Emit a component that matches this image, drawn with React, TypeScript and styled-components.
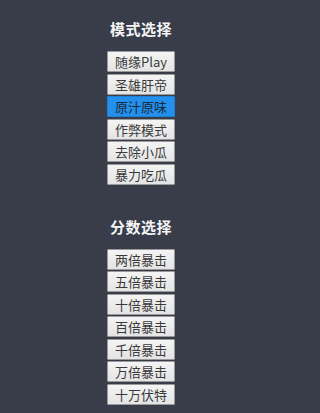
import React from "react";
import styled, { createGlobalStyle } from "styled-components";

const Global = createGlobalStyle`
  html, body { margin: 0; padding: 0; background: #393c49; }
  body { font-family: "Noto Sans CJK SC", "Liberation Sans", sans-serif; }
`;

const Page = styled.div`
  width: 282px;
  min-height: 413px;
  background: #393c49;
  display: flex;
  flex-direction: column;
  align-items: center;
  padding-top: 19px;
  box-sizing: border-box;
`;

const Section = styled.section<{ $gap: number }>`
  display: flex;
  flex-direction: column;
  align-items: center;
  margin-bottom: ${(p) => p.$gap}px;
`;

const Title = styled.h3`
  margin: 0 0 13px;
  color: #f4f4f6;
  font-size: 15px;
  line-height: 19px;
  font-weight: bold;
  letter-spacing: 0.5px;
`;

const List = styled.div`
  display: flex;
  flex-direction: column;
  align-items: center;
  gap: 1.5px;
`;

const Btn = styled.button<{ $active?: boolean }>`
  font-family: "Noto Sans CJK SC", "Liberation Sans", sans-serif;
  font-size: 13px;
  line-height: 15px;
  height: 21px;
  padding: 2px 7px;
  border: 1px solid ${(p) => (p.$active ? "#1f7fd6" : "#9a9a9a")};
  border-radius: 1px;
  color: ${(p) => (p.$active ? "#1b2a3a" : "#3a3a3a")};
  background: ${(p) =>
    p.$active
      ? "#2390ec"
      : "linear-gradient(#f4f4f4, #e4e4e4)"};
  box-sizing: border-box;
  white-space: nowrap;
`;

const modes = ["随缘Play", "圣雄肝帝", "原汁原味", "作弊模式", "去除小瓜", "暴力吃瓜"];
const scores = ["两倍暴击", "五倍暴击", "十倍暴击", "百倍暴击", "千倍暴击", "万倍暴击", "十万伏特"];

export default function App() {
  return (
    <>
      <Global />
      <Page>
        <Section $gap={32}>
          <Title>模式选择</Title>
          <List>
            {modes.map((m) => (
              <Btn key={m} $active={m === "原汁原味"}>{m}</Btn>
            ))}
          </List>
        </Section>
        <Section $gap={0}>
          <Title>分数选择</Title>
          <List>
            {scores.map((m) => (
              <Btn key={m}>{m}</Btn>
            ))}
          </List>
        </Section>
      </Page>
    </>
  );
}
